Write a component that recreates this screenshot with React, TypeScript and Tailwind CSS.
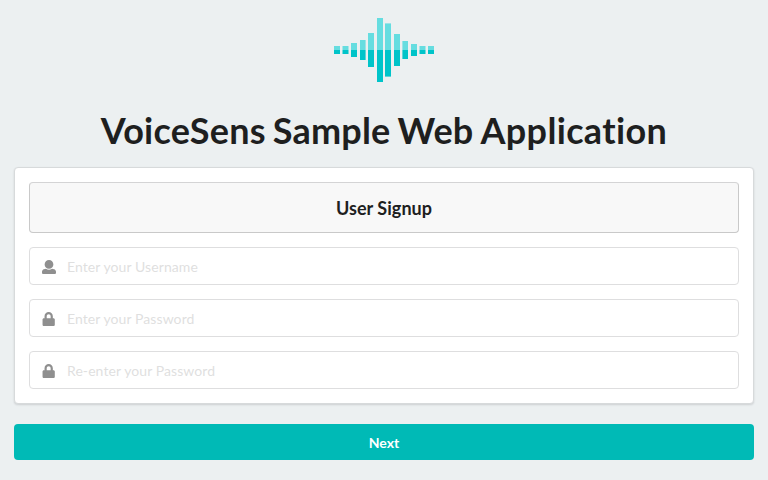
import React from "react";

// Each bar: left edge, top, bottom, width
const BARS = [
  [334, 46, 54, 6], [342.5, 46, 54, 6], [351, 43, 57, 6], [360, 40, 60, 5.6], [368, 33, 67, 6], [377, 18, 82, 6],
  [385, 23.4, 76.6, 6], [394, 34, 66, 6], [402.4, 41, 59, 5.6], [411, 44, 56, 6], [419.5, 46, 54, 6], [428, 46, 54, 6],
];

function Logo() {
  return (
    <svg width="100" height="64" viewBox="334 18 100 64">
      {BARS.map(([x, top, bottom, width]) => (
        <g key={x}>
          <rect x={x} y={top} width={width} height={50 - top} fill="#66dde0" />
          <rect x={x} y="50" width={width} height={bottom - 50} fill="#00c4c9" />
        </g>
      ))}
    </svg>
  );
}

function UserIcon() {
  return (
    <svg width="14" height="14" viewBox="0 0 512 512" fill="currentColor">
      <path d="M256 0c88.366 0 160 71.634 160 160s-71.634 160-160 160S96 248.366 96 160 167.634 0 256 0zm183.283 333.821l-71.313-17.828c-74.923 53.89-165.738 41.864-223.94 0l-71.313 17.828C29.981 344.505 0 382.903 0 426.955V464c0 26.51 21.49 48 48 48h416c26.51 0 48-21.49 48-48v-37.045c0-44.052-29.981-82.45-72.717-93.134z" />
    </svg>
  );
}

function LockIcon() {
  return (
    <svg width="13" height="14" viewBox="-20 0 475 512" fill="currentColor">
      <path d="M400 224h-24v-72C376 68.2 307.8 0 224 0S72 68.2 72 152v72H48c-26.5 0-48 21.5-48 48v192c0 26.5 21.5 48 48 48h352c26.5 0 48-21.5 48-48V272c0-26.5-21.5-48-48-48zm-104 0H152v-72c0-39.7 32.3-72 72-72s72 32.3 72 72v72z" />
    </svg>
  );
}

function Field({ icon, label, type }: { icon: React.ReactNode; label: string; type: string }) {
  return (
    <label className="flex h-[38px] items-center rounded border border-[#dededf] bg-white">
      <span className="flex w-[37px] shrink-0 justify-center pt-0.5 text-[#8f8f8f]">{icon}</span>
      <input
        type={type}
        placeholder={label}
        className="h-full min-w-0 flex-1 bg-transparent text-[14px] tracking-[0.08px] outline-none placeholder:text-[#dfdfdf]"
      />
    </label>
  );
}

export default function App() {
  return (
    <main className="flex h-[480px] w-full flex-col bg-[#ecf0f1] px-3.5 font-['Lato','Liberation_Sans',sans-serif] text-[#1e1f1f]">
      <div className="flex justify-center pt-[18px]">
        <Logo />
      </div>
      <h1 className="mt-6 text-center text-[36px] leading-[48px] font-bold tracking-[0.22px] [word-spacing:-1px]">
        VoiceSens <span className="-ml-px">Sample</span> <span className="-ml-px">Web</span>{" "}
        <span className="-ml-px tracking-[0.35px]">Application</span>
      </h1>
      <form className="mt-[13px] flex flex-col">
        <section className="flex h-[237px] flex-col gap-3.5 rounded border border-[#d7dadb] bg-white p-3.5 shadow-[0_1px_2px_0_rgba(34,36,38,0.15)]">
          <h2 className="flex h-[51px] items-center justify-center rounded border border-[#c9c9c9] border-t-[#d4d4d5] bg-[#f8f8f8] pt-0.5 text-[18px] font-bold tracking-[0.05px]">
            User Signup
          </h2>
          <Field icon={<UserIcon />} label="Enter your Username" type="text" />
          <Field icon={<LockIcon />} label="Enter your Password" type="password" />
          <Field icon={<LockIcon />} label="Re-enter your Password" type="password" />
        </section>
        <button type="button" className="mt-5 h-9 rounded bg-[#00bab6] text-[14px] font-bold text-white">
          Next
        </button>
      </form>
    </main>
  );
}
